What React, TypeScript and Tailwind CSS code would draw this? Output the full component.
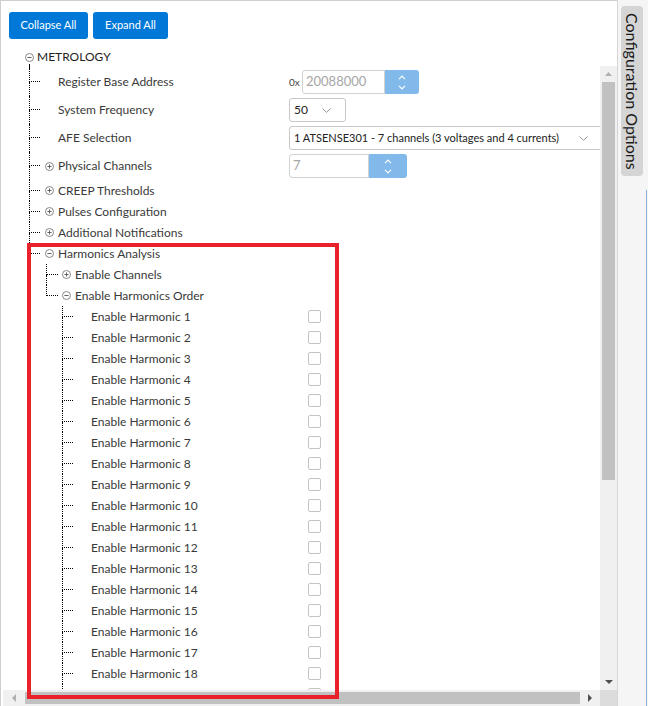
import { ReactNode } from 'react'

const FONT = "font-['Lato','Open_Sans',sans-serif]"

function Toggle({ open }: { open: boolean }) {
  return (
    <svg width="9" height="9" viewBox="0 0 9 9" className="shrink-0">
      <circle cx="4.5" cy="4.5" r="4" fill="none" stroke="#7a7a7a" strokeWidth="0.9" />
      <line x1="2.4" y1="4.5" x2="6.6" y2="4.5" stroke="#555" strokeWidth="0.9" />
      {!open && <line x1="4.5" y1="2.4" x2="4.5" y2="6.6" stroke="#555" strokeWidth="0.9" />}
    </svg>
  )
}

// dotted tree connector: vertical line + tick at row centre
function Connector({ left, width, last }: { left: number; width: number; last?: boolean }) {
  return (
    <div className="flex flex-col self-stretch shrink-0" style={{ marginLeft: left, width }}>
      <div className="h-1/2 border-l border-b border-dotted border-black" />
      {!last && <div className="flex-1 border-l border-dotted border-black" />}
    </div>
  )
}

function Spinner({ w }: { w: number }) {
  return (
    <div
      className="h-full bg-[#80b9ea] rounded-r-[3px] flex flex-col items-center justify-center gap-[5px]"
      style={{ width: w }}
    >
      <svg width="8" height="5" viewBox="0 0 8 5">
        <path d="M1 4.2 L4 1.2 L7 4.2" fill="none" stroke="#fff" strokeWidth="1.2" />
      </svg>
      <svg width="8" height="5" viewBox="0 0 8 5">
        <path d="M1 0.8 L4 3.8 L7 0.8" fill="none" stroke="#fff" strokeWidth="1.2" />
      </svg>
    </div>
  )
}

function Chevron() {
  return (
    <svg width="9" height="5" viewBox="0 0 9 5">
      <path d="M0.5 0.5 L4.5 4.3 L8.5 0.5" fill="none" stroke="#8a8a8a" strokeWidth="0.9" />
    </svg>
  )
}

function Row1({ label, toggle, children, h = 21 }: { label: string; toggle?: boolean; children?: ReactNode; h?: number }) {
  return (
    <div className="flex items-center" style={{ height: h }}>
      <div className="flex items-center w-[288px] self-stretch shrink-0">
        <Connector left={28} width={11} />
        {toggle ? (
          <>
            <div className="ml-[5px]"><Toggle open={false} /></div>
            <span className="ml-[4px]">{label}</span>
          </>
        ) : (
          <span className="ml-[18px]">{label}</span>
        )}
      </div>
      {children}
    </div>
  )
}

export default function App() {
  const harmonics = Array.from({ length: 19 }, (_, i) => i + 1)

  return (
    <div className={`relative w-[648px] h-[706px] bg-white overflow-hidden flex ${FONT} text-[12px] text-[#3a3a3a]`}>
      {/* main panel */}
      <div className="w-[617px] h-full flex flex-col border-t border-l border-[#cfcfcf]">
        <div className="flex gap-[5px] ml-[8px] mt-[11px]">
          <button className="h-[27px] w-[79px] bg-[#0078d7] text-white text-[11px] rounded-[3px]">Collapse All</button>
          <button className="h-[27px] w-[75px] bg-[#0078d7] text-white text-[11px] rounded-[3px]">Expand All</button>
        </div>

        <div className="flex items-center h-[14px] mt-[11px]">
          <div className="ml-[24px]"><Toggle open /></div>
          <span className="ml-[3px] text-[#1e1e1e]">METROLOGY</span>
        </div>
        <div className="h-[2px] ml-[28px] border-l border-dotted border-black" />

        <div className="flex h-[624px]">
          <div className="flex-1 overflow-hidden">
            <div className="h-[2px] ml-[28px] border-l border-dotted border-black" />
            <Row1 label="Register Base Address" h={28}>
              <div className="flex items-center h-[24px]">
                <span className="text-[10px] text-[#444] w-[13px]">0x</span>
                <div className="h-full w-[83px] border border-[#d2d2d2] rounded-l-[3px] flex items-center pl-[3px] text-[13px] text-[#a6a6a6]">20088000</div>
                <Spinner w={34} />
              </div>
            </Row1>
            <Row1 label="System Frequency" h={28}>
              <div className="h-[24px] w-[57px] border border-[#c8c8c8] rounded-[3px] flex items-center justify-between pl-[4px] pr-[14px] text-[#222]">
                <span>50</span>
                <Chevron />
              </div>
            </Row1>
            <Row1 label="AFE Selection" h={28}>
              <div className="h-[24px] w-[316px] shrink-0 border border-[#c8c8c8] rounded-[3px] flex items-center justify-between pl-[4px] pr-[16px] text-[#222] text-[11px] whitespace-nowrap">
                <span>1 ATSENSE301 - 7 channels (3 voltages and 4 currents)</span>
                <Chevron />
              </div>
            </Row1>
            <Row1 label="Physical Channels" toggle h={28}>
              <div className="flex items-center h-[24px]">
                <div className="h-full w-[80px] border border-[#d2d2d2] rounded-l-[3px] flex items-center pl-[3px] text-[13px] text-[#a6a6a6]">7</div>
                <Spinner w={38} />
              </div>
            </Row1>
            <Row1 label="CREEP Thresholds" toggle />
            <Row1 label="Pulses Configuration" toggle />
            <Row1 label="Additional Notifications" toggle />

            <div className="flex items-center h-[21px]">
              <Connector left={28} width={11} last />
              <div className="ml-[5px]"><Toggle open /></div>
              <span className="ml-[4px]">Harmonics Analysis</span>
            </div>
            <div className="flex items-center h-[21px]">
              <Connector left={45} width={12} />
              <div className="ml-[4px]"><Toggle open={false} /></div>
              <span className="ml-[4px]">Enable Channels</span>
            </div>
            <div className="flex items-center h-[21px]">
              <Connector left={45} width={12} last />
              <div className="ml-[4px]"><Toggle open /></div>
              <span className="ml-[4px]">Enable Harmonics Order</span>
            </div>

            {harmonics.map((n) => (
              <div key={n} className="flex items-center h-[21px]">
                <div className="flex items-center w-[307px] self-stretch shrink-0">
                  <Connector left={61} width={11} />
                  {n < 19 && <span className="ml-[18px]">Enable Harmonic {n}</span>}
                </div>
                <div className="w-[13px] h-[13px] border border-[#c4c4c4] rounded-[2px] bg-white" />
              </div>
            ))}
          </div>

          {/* vertical scrollbar */}
          <div className="w-[17px] h-full bg-[#f0f0f0] flex flex-col items-center">
            <div className="h-[16px] flex items-center justify-center">
              <svg width="7" height="4" viewBox="0 0 7 4"><path d="M0 4 L3.5 0 L7 4 Z" fill="#b0b0b0" /></svg>
            </div>
            <div className="w-[13px] h-[398px] bg-[#c1c1c1]" />
            <div className="flex-1" />
            <div className="h-[16px] flex items-center justify-center">
              <svg width="8" height="4" viewBox="0 0 8 4"><path d="M0 0 L8 0 L4 4 Z" fill="#505050" /></svg>
            </div>
          </div>
        </div>

        {/* horizontal scrollbar */}
        <div className="flex h-[16px] shrink-0">
          <div className="flex-1 ml-[2px] bg-[#f0f0f0] flex items-center">
            <div className="w-[22px] flex items-center justify-center">
              <svg width="4" height="8" viewBox="0 0 4 8"><path d="M4 0 L4 8 L0 4 Z" fill="#b0b0b0" /></svg>
            </div>
            <div className="h-[12px] w-[555px] bg-[#c1c1c1]" />
            <div className="flex-1 flex items-center justify-center">
              <svg width="4" height="8" viewBox="0 0 4 8"><path d="M0 0 L0 8 L4 4 Z" fill="#505050" /></svg>
            </div>
          </div>
          <div className="w-[17px] bg-[#dcdcdc]" />
        </div>
      </div>

      {/* right side panel */}
      <div className="flex-1 h-full bg-[#f5f5f5] border-l border-[#d6d6d6] flex">
        <div className="flex-1 pt-[6px] pl-[3px]">
          <div className="w-[22px] h-[170px] bg-[#d5d5d5] rounded-[4px] flex items-center justify-center">
            <span className="[writing-mode:vertical-rl] text-[16px] text-[#1a1a1a] whitespace-nowrap leading-none">
              Configuration Options
            </span>
          </div>
        </div>
        <div className="w-[1px] mt-[190px] bg-[#8db0d9]" />
        <div className="w-[1px]" />
      </div>

      {/* red annotation box */}
      <div className="absolute left-[27px] top-[243px] w-[312px] h-[456px] border-4 border-[#e8212b]" />
    </div>
  )
}
